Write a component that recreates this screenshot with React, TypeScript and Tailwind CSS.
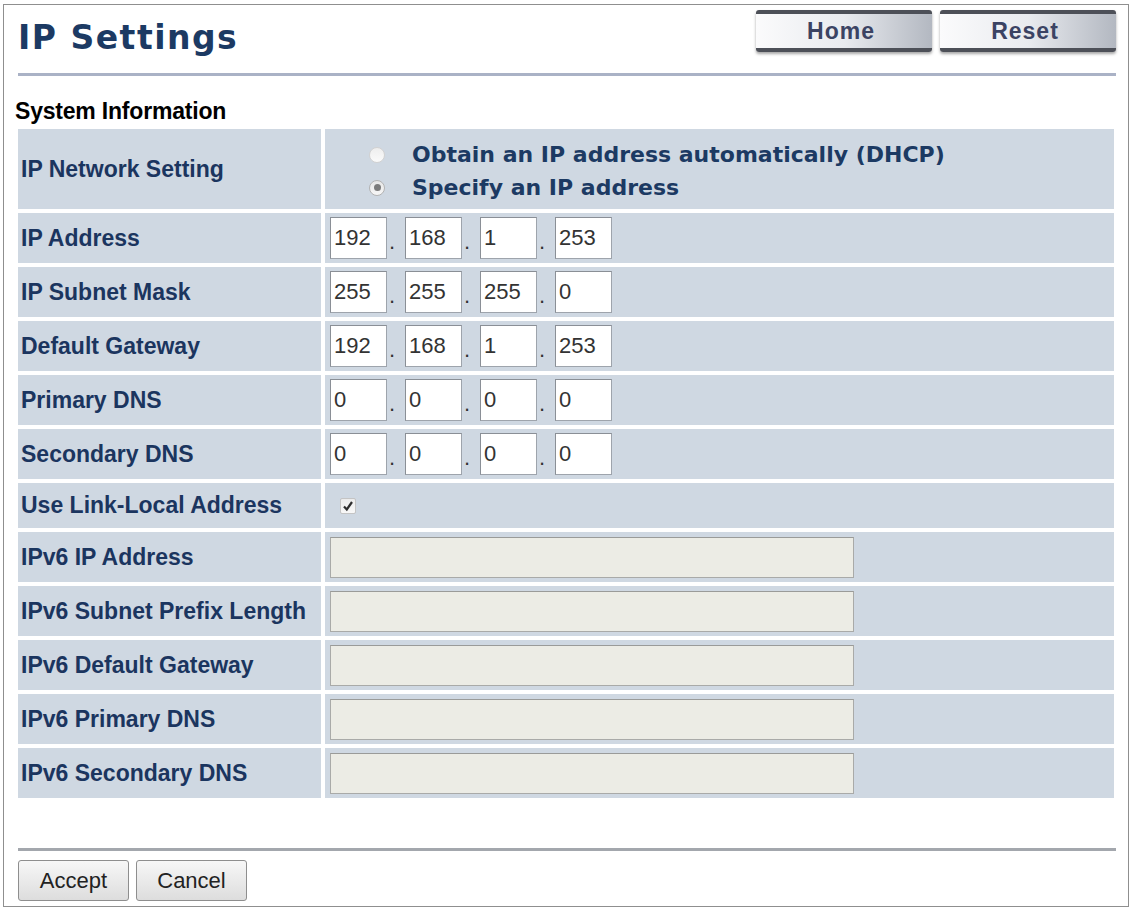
import React from 'react';

const LABEL = 'text-[23px] font-bold text-[#1b355f] leading-none pl-[3px] flex items-center bg-[#cfd8e2]';
const VALUE = 'bg-[#cfd8e2] flex items-center pl-[5px]';

function OctetInputs({ values }: { values: string[] }) {
  return (
    <div className="flex items-center">
      {values.map((v, i) => (
        <React.Fragment key={i}>
          {i > 0 && <span className="w-[18px] pl-[2px] text-[22px] leading-none text-[#333] self-end pb-[6px]">.</span>}
          <div className="w-[57px] h-[42px] bg-white border border-[#9ea4ac] border-t-[#8a8f96] border-l-[#8a8f96] flex items-center pl-[3px] text-[22px] text-[#333] leading-none">
            {v}
          </div>
        </React.Fragment>
      ))}
    </div>
  );
}

function DisabledInput() {
  return <div className="w-[524px] h-[41px] bg-[#ecece5] border border-[#a9aaa8] border-t-[#9a9b99]" />;
}

function TopButton({ label }: { label: string }) {
  return (
    <div className="w-[176px] h-[42px] rounded-[3px] border-t-[4px] border-b-[4px] border-[#4d5058] bg-gradient-to-r from-[#fbfbfc] via-[#e9ebef] to-[#b3b8c1] shadow-[0_2px_3px_rgba(0,0,0,0.35)] flex items-center justify-center pr-[6px]">
      <span className="text-[23px] font-bold tracking-[1px] text-[#3b4363] leading-none">{label}</span>
    </div>
  );
}

function Radio({ checked }: { checked: boolean }) {
  return (
    <div
      className={
        'w-[16px] h-[16px] rounded-full border flex items-center justify-center ' +
        (checked ? 'border-[#b3b3b3] bg-gradient-to-b from-[#e6e6e6] to-[#f7f7f7]' : 'border-[#d2d2d2] bg-gradient-to-b from-[#eeeeee] to-[#fafafa]')
      }
    >
      {checked && <div className="w-[7px] h-[7px] rounded-full bg-[#7b7b7b]" />}
    </div>
  );
}

export default function App() {
  const ipv4: [string, string[]][] = [
    ['IP Address', ['192', '168', '1', '253']],
    ['IP Subnet Mask', ['255', '255', '255', '0']],
    ['Default Gateway', ['192', '168', '1', '253']],
    ['Primary DNS', ['0', '0', '0', '0']],
    ['Secondary DNS', ['0', '0', '0', '0']],
  ];
  const ipv6 = ['IPv6 IP Address', 'IPv6 Subnet Prefix Length', 'IPv6 Default Gateway', 'IPv6 Primary DNS', 'IPv6 Secondary DNS'];

  return (
    <div className="w-[1132px] h-[912px] bg-white overflow-hidden" style={{ fontFamily: '"Liberation Sans", Arial, sans-serif' }}>
      <div className="ml-[3px] mt-[4px] w-[1126px] h-[903px] border border-[#8f8f8f] px-[14px] flex flex-col">
        {/* Header */}
        <div className="h-[68px] flex justify-between items-start">
          <h1
            className="mt-[16px] text-[33px] font-bold tracking-[1.5px] text-[#1c3a63] leading-none"
            style={{ fontFamily: '"DejaVu Sans", Verdana, sans-serif' }}
          >
            IP Settings
          </h1>
          <div className="flex gap-[8px] mt-[5px] mr-[-2px]">
            <TopButton label="Home" />
            <TopButton label="Reset" />
          </div>
        </div>
        <div className="h-[3px] bg-[#aab2c6] mr-[-2px]" />

        <div className="mt-[24px] ml-[-3px] text-[23px] font-bold tracking-[-0.2px] text-black leading-none">System Information</div>

        {/* Table */}
        <div className="mt-[6px] grid grid-cols-[303px_1fr] gap-[4px]">
          <div className={LABEL + ' h-[80px]'}>IP Network Setting</div>
          <div
            className={VALUE + ' flex-col !items-start justify-center gap-[11px] pl-[44px] pt-[4px]'}
            style={{ fontFamily: '"DejaVu Sans", Verdana, sans-serif' }}
          >
            <div className="flex items-center gap-[27px]">
              <Radio checked={false} />
              <span className="text-[22px] font-bold text-[#1c3a63] leading-none">Obtain an IP address automatically (DHCP)</span>
            </div>
            <div className="flex items-center gap-[27px]">
              <Radio checked />
              <span className="text-[22px] font-bold text-[#1c3a63] leading-none">Specify an IP address</span>
            </div>
          </div>

          {ipv4.map(([label, vals]) => (
            <React.Fragment key={label}>
              <div className={LABEL + ' h-[50px]'}>{label}</div>
              <div className={VALUE}>
                <OctetInputs values={vals} />
              </div>
            </React.Fragment>
          ))}

          <div className={LABEL + ' h-[45px]'}>Use Link-Local Address</div>
          <div className={VALUE + ' pl-[15px]'}>
            <div className="w-[16px] h-[16px] rounded-[2px] border border-[#c4c4c4] bg-gradient-to-b from-[#ececec] to-[#f8f8f8] flex items-center justify-center">
              <svg width="12" height="12" viewBox="0 0 12 12">
                <path d="M2 6.5 L4.8 9.5 L10 2" fill="none" stroke="#2e2e2e" strokeWidth="2.2" />
              </svg>
            </div>
          </div>

          {ipv6.map((label) => (
            <React.Fragment key={label}>
              <div className={LABEL + ' h-[50px]'}>{label}</div>
              <div className={VALUE}>
                <DisabledInput />
              </div>
            </React.Fragment>
          ))}
        </div>

        {/* Footer */}
        <div className="mt-[50px] h-[3px] bg-[#a3a7ad] mr-[-2px]" />
        <div className="mt-[9px] flex gap-[7px]">
          {['Accept', 'Cancel'].map((t) => (
            <button
              key={t}
              className="w-[111px] h-[41px] rounded-[3px] border border-[#8e8e8e] bg-gradient-to-b from-[#f7f7f7] to-[#dddddd] text-[22px] text-[#222] leading-none"
            >
              {t}
            </button>
          ))}
        </div>
      </div>
    </div>
  );
}
